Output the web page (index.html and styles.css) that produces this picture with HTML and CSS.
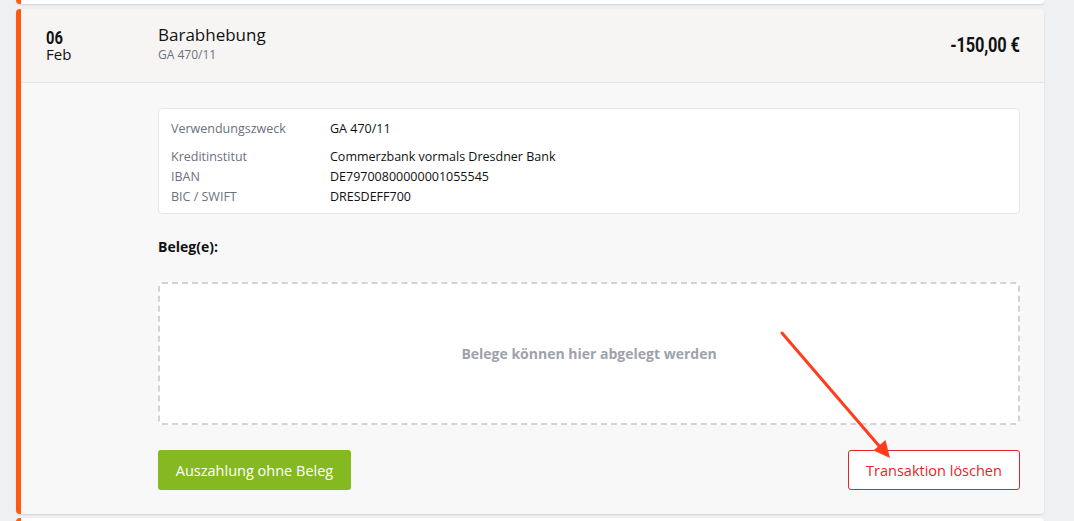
FILE: index.html
```html
<!DOCTYPE html>
<html lang="de">
<head>
<meta charset="utf-8">
<title>Transaktion</title>
<link rel="stylesheet" href="styles.css">
</head>
<body>
<div class="list">
  <div class="card card-prev"></div>
  <div class="card card-open">
    <div class="tx-head">
      <div class="tx-date">
        <div class="day">06</div>
        <div class="month">Feb</div>
      </div>
      <div class="tx-title">
        <div class="name">Barabhebung</div>
        <div class="ref">GA 470/11</div>
      </div>
      <div class="tx-amount">-150,00 €</div>
    </div>
    <div class="tx-body">
      <div class="info">
        <div class="info-row first"><span class="lbl">Verwendungszweck</span><span class="val">GA 470/11</span></div>
        <div class="info-row"><span class="lbl">Kreditinstitut</span><span class="val">Commerzbank vormals Dresdner Bank</span></div>
        <div class="info-row"><span class="lbl">IBAN</span><span class="val">DE79700800000001055545</span></div>
        <div class="info-row"><span class="lbl">BIC / SWIFT</span><span class="val">DRESDEFF700</span></div>
      </div>
      <div class="beleg-title">Beleg(e):</div>
      <div class="dropzone">Belege können hier abgelegt werden</div>
      <div class="actions">
        <button class="btn btn-green">Auszahlung ohne Beleg</button>
        <button class="btn btn-red">Transaktion löschen</button>
      </div>
    </div>
  </div>
  <div class="card card-next"></div>
</div>
<svg class="arrow" width="1074" height="521" viewBox="0 0 1074 521">
  <line x1="782" y1="333" x2="880" y2="447" stroke="#ff3d1c" stroke-width="3" stroke-linecap="round"/>
  <polygon points="890,458 873.5,450.5 885.5,440" fill="#ff3d1c"/>
</svg>
</body>
</html>
```

FILE: styles.css
```css
html, body {
  margin: 0;
  padding: 0;
  background: #eff0f2;
  font-family: "Open Sans", "Noto Sans", sans-serif;
  color: #111;
}
.list {
  width: 1028px;
  margin-left: 16px;
  display: flex;
  flex-direction: column;
  gap: 5px;
}
.card {
  background: #f8f8f9;
  border-left: 5px solid #ff5a14;
  border-radius: 4px;
  box-shadow: 0 1px 2px rgba(0,0,0,0.12);
}
.card-prev {
  height: 4px;
  background: #fff;
  border-radius: 0 0 4px 4px;
}
.card-next {
  height: 10px;
  background: #fff;
  margin-top: -1px;
}
.card-open {
  overflow: hidden;
}
.tx-head {
  height: 73px;
  background: #f6f5f4;
  border-bottom: 1px solid #e4e4e6;
  display: flex;
  align-items: flex-start;
  padding: 0 24px 0 25px;
}
.tx-date {
  width: 112px;
  padding-top: 20px;
}
.day {
  font-family: Roboto, "Open Sans", sans-serif;
  font-weight: bold;
  font-size: 17.5px;
  line-height: 18px;
  transform: scaleX(0.84);
  transform-origin: left center;
}
.month {
  font-size: 15px;
  line-height: 14px;
}
.tx-title {
  flex: 1;
  padding-top: 15px;
}
.name {
  font-size: 17px;
  line-height: 22px;
}
.ref {
  font-size: 12px;
  line-height: 16px;
  color: #6b7180;
  margin-top: 1px;
}
.tx-amount {
  padding-top: 27px;
  font-family: Roboto, "Open Sans", sans-serif;
  font-weight: bold;
  font-size: 19.5px;
  line-height: 20px;
  letter-spacing: -0.2px;
  transform: scaleX(0.84);
  transform-origin: right center;
}
.tx-body {
  padding: 25px 24px 24px 137px;
}
.info {
  background: #fff;
  border: 1px solid #e6e6e8;
  border-radius: 4px;
  padding: 10px 12px 6px;
  font-size: 12.5px;
}
.info-row {
  display: flex;
  line-height: 20px;
}
.info-row.first {
  margin-bottom: 8px;
}
.lbl {
  width: 159px;
  color: #6b7180;
}
.val {
  color: #111;
}
.beleg-title {
  margin-top: 23px;
  font-weight: bold;
  font-size: 14px;
  line-height: 20px;
}
.dropzone {
  margin-top: 25px;
  height: 139px;
  background: #fff;
  border: 2px dashed #d2d3d9;
  border-radius: 4px;
  display: flex;
  align-items: center;
  justify-content: center;
  color: #9ea2ac;
  font-weight: bold;
  font-size: 14px;
}
.actions {
  margin-top: 25px;
  display: flex;
  justify-content: space-between;
}
.btn {
  height: 40px;
  font-family: "Open Sans", "Noto Sans", sans-serif;
  font-size: 14.5px;
  border-radius: 3px;
  padding: 0 12px;
  cursor: pointer;
}
.btn-green {
  width: 193px;
  background: #84b921;
  color: #fff;
  border: none;
}
.btn-red {
  width: 172px;
  background: #fff;
  color: #e0262b;
  border: 1px solid #e0262b;
}
.arrow {
  position: absolute;
  left: 0;
  top: 0;
  pointer-events: none;
}
```
